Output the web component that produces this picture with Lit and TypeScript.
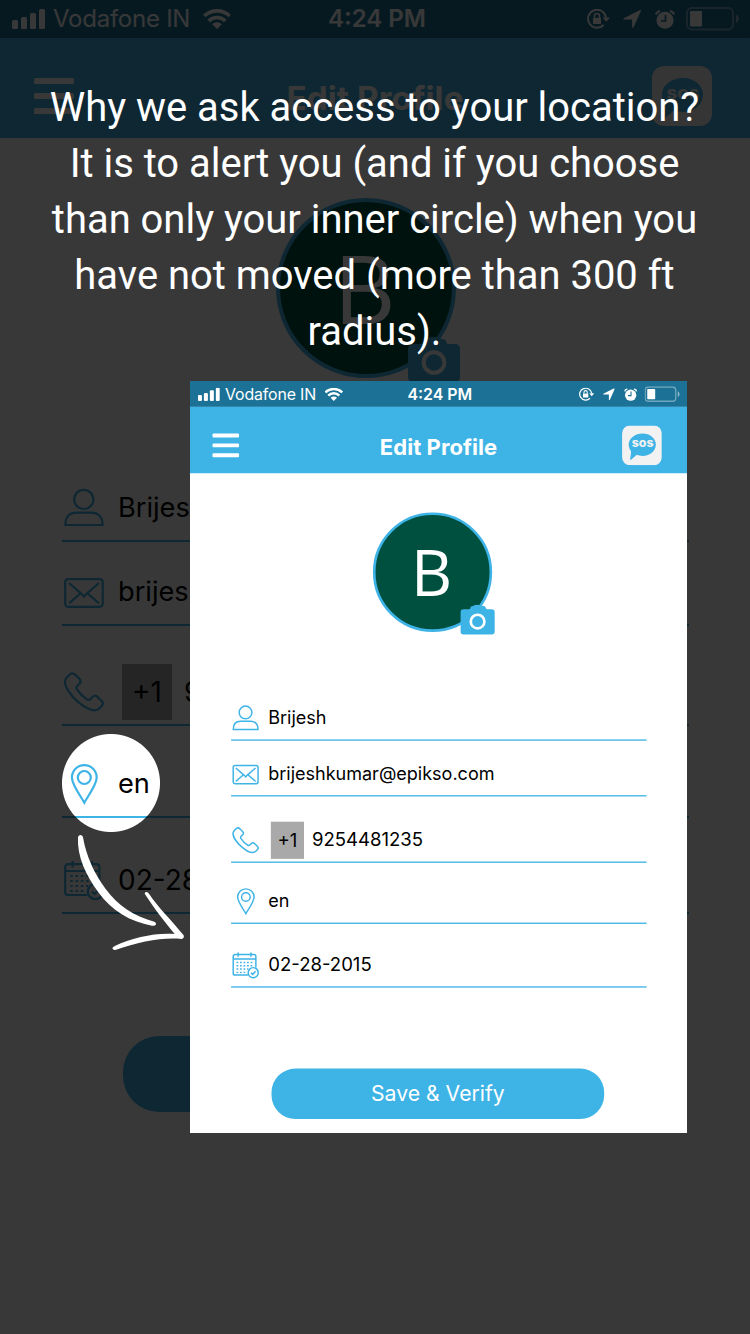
import { LitElement, html, css, svg } from "lit";
import { customElement } from "lit/decorators.js";

const icons = {
  user: svg`<circle cx="19.8" cy="11.4" r="9.6"/><path d="M1.4 37V36C1.6 29 5.5 24.7 12 24.7H27.6C34.200 24.7 38.200 29 38.600 36V37Z"/>`,
  mail: svg`<rect x="1.2" y="7.200" width="37.500" height="27.600" rx="3"/><path d="M5 11L17.500 21.800L20 24.600L22.500 21.800L35 11M5 31.400L16.200 21.600M35 31.400L23.800 21.600"/>`,
  phone: svg`<path d="M1.200 8.200C1.800 6 4.500 3.400 6.200 2.100C8 .9 9.800 1.200 11.200 2.600L15.600 7C17 8.500 16.900 10.300 15.500 11.800L12.900 14.300C12.100 15.200 12.200 16.200 13 17.400C15.500 21.200 19 24.700 22.900 27.400C24.100 28.200 25.300 28.100 26.300 27.100L28.600 24.800C30 23.400 31.800 23.400 33.300 24.800L37.900 29.300C39.300 30.800 39.200 32.300 38 33.600C36.600 35.100 35.500 36.600 33.700 37.600C29.500 39.800 21.500 36.400 14 29.900C6.300 23.100 -.2 13.800 1.200 8.200Z"/>`,
  pin: svg`<path d="M20.300 38.600C17.500 33.500 7.900 21 7.900 13.600A12.400 12.400 0 0 1 32.700 13.600C32.700 21 23.100 33.500 20.300 38.600Z"/><circle cx="20.300" cy="13.500" r="6.500"/>`,
  calendar: svg`<path d="M23.500 35H4A2.800 2.800 0 0 1 1.200 32.200V7A2.800 2.800 0 0 1 4 4.200H32.600A2.800 2.800 0 0 1 35.400 7V23.600M1.200 11H35.400M8.600 1V7.600M28 1V7.600"/><path stroke-dasharray="2.600 2.700" d="M6.200 16H31.500M6.200 21H31.500M6.200 26H24M6.200 31H22"/><circle cx="31.400" cy="31.500" r="7.600"/><path d="M28 31.500L30.600 34L35 29.400"/>`,
};

@customElement("form-row")
class FormRow extends LitElement {
  static properties = { icon: {}, code: {}, value: {}, kind: { reflect: true } };
  declare icon: keyof typeof icons;
  declare code: string;
  declare value: string;
  declare kind: string;
  static styles = css`
    :host {
      display: flex;
      align-items: flex-end;
      box-sizing: border-box;
      border-bottom: 2px solid #3eb3e6;
      padding-left: 2px;
      color: #000;
      font-size: 27.2px;
      line-height: 40px;
    }
    svg { width: 40px; height: 40px; margin-bottom: 12px; fill: none; stroke: #3eb3e6; stroke-width: 2.2; flex: none; overflow: visible; }
    .text { margin: 0 0 12px 14px; white-space: pre; }
    .code { background: #a9a9a9; width: 50px; height: 56px; line-height: 57px; text-align: center; margin: 0 0 4px 18px; font-size: 28px; }
    .code + .text { margin-left: 12px; }
    :host([kind="digits"]) .text { font-size: 28px; margin-bottom: 12.5px; }
  `;
  render() {
    return html`<svg viewBox="0 0 40 40">${icons[this.icon]}</svg>
      ${this.code ? html`<span class="code">${this.code}</span>` : ""}
      <span class="text">${this.value}</span>`;
  }
}

@customElement("profile-screen")
class ProfileScreen extends LitElement {
  static styles = css`
    :host { display: flex; flex-direction: column; width: 750px; height: 1334px; background: #fff; font-family: Inter, "Liberation Sans", sans-serif; }
    .status { height: calc(38px + var(--bar-extra, 0px)); flex: none; box-sizing: border-box; background: #1b7296; color: #fff; display: grid; grid-template-columns: 1fr auto 1fr; align-items: center; padding: var(--bar-extra, 0px) 11px 0 12px; font-size: 24px; line-height: 36px; }
    .left { display: flex; align-items: center; }
    .carrier { margin-left: 8px; letter-spacing: -0.25px; }
    .wifi { margin-left: 12.500px; }
    .time { font-weight: 600; font-size: 24px; padding-left: 3px; }
    .right { display: flex; align-items: center; justify-content: flex-end; }
    svg { display: block; flex: none; }
    .arrow { margin-left: 13px; }
    .alarm { margin-left: 14px; }
    .battery { margin-left: 11px; }
    header { height: 100px; flex: none; box-sizing: border-box; background: #3eb3e6; color: #fff; display: flex; justify-content: space-between; align-items: center; padding: 28px 38px 12px 34px; }
    .menu { display: grid; gap: 9px; width: 64px; }
    .menu i { height: 6px; width: 40px; border-radius: 1.500px; background: #fff; }
    h1 { margin: 3px 0 0; font-size: 33.2px; font-weight: 700; line-height: 40px; letter-spacing: 0.1px; }
    .sos { width: 60px; height: 60px; }
    .sos text { font: 800 17px Inter, sans-serif; fill: #f2f2f2; }
    .photo { margin: calc(60px - var(--bar-extra, 0px)) 0 0 276px; display: grid; width: 184px; height: 185px; flex: none; }
    .avatar { grid-area: 1 / 1; box-sizing: border-box; width: 180px; height: 180px; border-radius: 50%; border: 4px solid #3eb3e6; background: #005040; color: #fff; font: 96px/169px "Open Sans", sans-serif; text-align: center; padding-right: 3px; }
    .camera { grid-area: 1 / 1; justify-self: end; align-self: end; }
    .form { margin: 0 61px 0 62px; display: flex; flex-direction: column; }
    .h1 { height: 159px; }
    .h2 { height: 84px; }
    .h3 { height: 100px; }
    .h4 { height: 92px; }
    .h5 { height: 96px; }
    .save { align-self: center; margin: 122px 2px 0 0; width: 502px; height: 76px; border-radius: 36px; background: #3eb3e6; color: #fff; font-size: 32px; line-height: 76px; text-align: center; }
  `;
  render() {
    return html`
      <div class="status">
        <div class="left">
          <svg width="33" height="20" fill="currentColor"><rect y="11" width="6" height="9" rx="1.500"/><rect x="9" y="8" width="6" height="12" rx="1.500"/><rect x="18" y="4" width="6" height="16" rx="1.500"/><rect x="27" width="6" height="20" rx="1.500"/></svg>
          <span class="carrier">Vodafone IN</span>
          <svg class="wifi" width="28" height="20" viewBox="0 0 28 20"><g fill="none" stroke="currentColor" stroke-width="3.700"><path d="M1.300 7A18.400 18.400 0 0 1 26.700 7"/><path d="M5.700 12A11.600 11.600 0 0 1 22.300 12"/></g><path fill="currentColor" d="M9.200 15.200A6.800 6.800 0 0 1 18.800 15.200L14 20Z"/></svg>
        </div>
        <span class="time">4:24 PM</span>
        <div class="right">
          <svg width="23" height="20" viewBox="0 0 23 20"><path fill="none" stroke="currentColor" stroke-width="1.900" d="M16.600 16A9 9 0 1 1 19 8.500"/><path fill="currentColor" d="M15.600 8.500H23L19.300 12.800ZM6 9H14V15H6Z"/><path fill="none" stroke="currentColor" stroke-width="1.600" d="M7.500 9V7A2.500 2.500 0 0 1 12.500 7V9"/></svg>
          <svg class="arrow" width="18" height="18" viewBox="0 0 18 18"><path fill="currentColor" d="M17 .1Q18.200 -.2 17.900 1.100L10.600 17.200Q9.600 18.400 9.100 17V9.500H1.200Q-.4 9.200 .8 8.200Z"/></svg>
          <svg class="alarm" width="20" height="19" viewBox="0 0 20 19"><circle cx="10" cy="10.300" r="8.500" fill="currentColor"/><path fill="none" stroke="currentColor" stroke-width="2" d="M1 4.500Q1.500 2 5 1M19 4.500Q18.500 2 15 1"/><path fill="none" stroke="#1b7296" stroke-width="1.700" d="M10.500 5V11H6"/></svg>
          <svg class="battery" width="53" height="24" viewBox="0 0 53 24"><rect x="1" y="1" width="46" height="21.500" rx="5" fill="none" stroke="currentColor" stroke-opacity=".38" stroke-width="2"/><rect x="4" y="4" width="12" height="15.500" rx="1" fill="currentColor"/><path fill="currentColor" fill-opacity=".5" d="M50 7.500Q53 9 53 11.800T50 16Z"/></svg>
        </div>
      </div>
      <header>
        <div class="menu"><i></i><i></i><i></i></div>
        <h1>Edit Profile</h1>
        <svg class="sos" viewBox="0 0 60 60"><rect width="60" height="60" rx="12" fill="#f2f2f2"/><path fill="#3eb3e6" d="M31 12C42 12 51 19 51 28.700S42 46 31 46C27.500 46 25 45.500 22 44.300C19.500 46.500 16.500 49.500 13.500 51.500C12.500 52 12 51.500 12.200 50.500C13 46 13.500 43 13.500 39C11.500 36 10 32.500 10 28.700C10 19 20 12 31 12Z"/><text x="31" y="33" text-anchor="middle" textLength="33" lengthAdjust="spacingAndGlyphs">sos</text></svg>
      </header>
      <div class="photo">
        <div class="avatar">B</div>
        <svg class="camera" width="52" height="46" viewBox="0 0 52 46"><path fill="#3eb3e6" d="M5 7H13Q14.500 7 15 5L15.500 3.500Q16.500 2 19 2H20Q21 0 23 0H30Q32 0 33 2H35Q37.500 2 38 4L38.500 5.500Q39 7 41 7H47Q52 7 52 12V40Q52 45 47 45H5Q0 45 0 40V12Q0 7 5 7Z"/><circle cx="26" cy="25.500" r="10.300" fill="none" stroke="#fff" stroke-width="4"/></svg>
      </div>
      <div class="form">
        <form-row class="h1" icon="user" value="Brijesh"></form-row>
        <form-row class="h2" icon="mail" value="brijeshkumar@epikso.com"></form-row>
        <form-row class="h3" kind="digits" icon="phone" code="+1" value="9254481235"></form-row>
        <form-row class="h4" icon="pin" value="en"></form-row>
        <form-row class="h5" kind="digits" icon="calendar" value="02-28-2015"></form-row>
      </div>
      <div class="save">Save &amp; Verify</div>
    `;
  }
}

@customElement("app-root")
class AppRoot extends LitElement {
  static styles = css`
    :host { display: block; position: relative; width: 750px; height: 1334px; overflow: hidden; }
    .dim { position: absolute; inset: 0; background: radial-gradient(circle at 111px 783px, transparent 48.500px, rgba(0, 0, 0, 0.78) 49.500px); }
    .inset { position: absolute; left: 190px; top: 381px; width: 497px; height: 752px; overflow: hidden; background: #fff; }
    .inset profile-screen { --bar-extra: 1.4px; transform: scale(0.66267, 0.6637); transform-origin: 0 0; }
    .message { position: absolute; left: 0; right: 1px; top: 80px; margin: 0; color: #fff; text-align: center; font: 39.950px/56px Roboto, sans-serif; }
    .pointer { position: absolute; left: 50px; top: 720px; }
  `;
  render() {
    return html`
      <profile-screen></profile-screen>
      <div class="dim"></div>
      <p class="message">Why we ask access to your location?<br>It is to alert you (and if you choose<br>than only your inner circle) when you<br>have not moved (more than 300 ft<br>radius).</p>
      <div class="inset"><profile-screen></profile-screen></div>
      <svg class="pointer" width="160" height="240" viewBox="0 0 480 720" fill="#fff"><path d="M84 351Q86 345 92 345Q98 346 99 352C109 410 133 461 167 507C205 558 250 587 313 605Q320 608 318 613Q315 619 306 617C240 606 184 571 145 517C107 464 81 410 84 351Z"/><path d="M284 521Q284 515 290 516Q294 517 297 521C325 563 365 601 401 646Q404 656 394 657C340 651 268 665 196 690Q189 691 187 685Q188 680 196 677C250 653 312 638 374 642C343 604 314 567 284 521Z"/></svg>
    `;
  }
}
